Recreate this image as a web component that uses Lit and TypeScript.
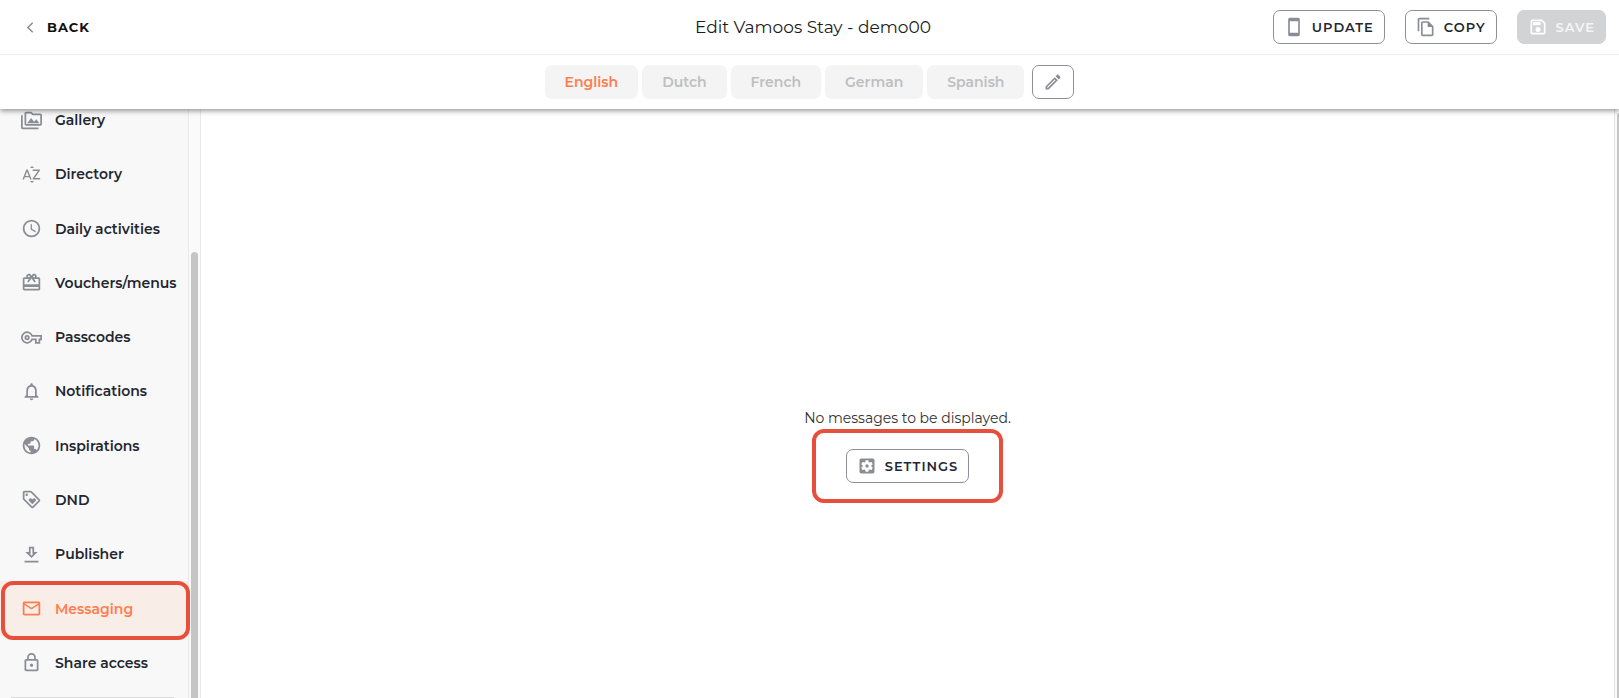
import { LitElement, html, svg, css } from "lit";
import { customElement, property, state } from "lit/decorators.js";

const icons: Record<string, unknown> = {
  back: svg`<path d="M14.500 6.500 9 12l5.500 5.500" fill="none" stroke="currentColor" stroke-width="1.600"/>`,
  gallery: svg`<path d="M2 6H0v14c0 1.100.9 2 2 2h18v-2H2V6zm5 9h14l-3.500-4.500-2.500 3.010L11.500 9zM22 4h-8l-2-2H6c-1.100 0-2 .9-2 2v12c0 1.100.9 2 2 2h16c1.100 0 2-.9 2-2V6c0-1.100-.9-2-2-2zm0 12H6V4h5.170l2 2H22v10z"/>`,
  directory: svg`<path d="M14.940 4.660h-4.720l2.360-2.360 2.360 2.360zm-4.690 14.710h4.660l-2.330 2.330-2.330-2.330zM6.100 6.270L1.600 17.730h1.840l.92-2.450h5.110l.92 2.450h1.840L7.740 6.270H6.100zm-1.130 7.370l1.940-5.180 1.940 5.180H4.970zm10.760 2.500h6.120v1.590h-8.530v-1.290l5.920-8.560h-5.880v-1.600h8.300v1.260l-5.930 8.600z"/>`,
  clock: svg`<path d="M12 2a10 10 0 1 0 0 20 10 10 0 0 0 0-20zm0 18a8 8 0 1 1 0-16 8 8 0 0 1 0 16zm.5-13H11v6l5.250 3.150.75-1.230-4.500-2.670z"/>`,
  gift: svg`<path d="M20 6h-2.180c.11-.31.18-.65.18-1 0-1.660-1.340-3-3-3-1.050 0-1.960.54-2.500 1.350l-.5.670-.5-.68C10.960 2.540 10.050 2 9 2 7.340 2 6 3.340 6 5c0 .35.07.69.18 1H4c-1.110 0-2 .89-2 2v11c0 1.110.89 2 2 2h16c1.110 0 2-.89 2-2V8c0-1.110-.89-2-2-2zm-5-2a1 1 0 1 1 0 2 1 1 0 0 1 0-2zM9 4a1 1 0 1 1 0 2 1 1 0 0 1 0-2zm11 15H4v-2h16v2zm0-5H4V8h5.080L7 10.830 8.620 12 12 7.400l3.380 4.600L17 10.830 14.920 8H20v6z"/>`,
  key: svg`<path d="M22 19h-6v-4h-2.680A7 7 0 1 1 13.320 9H24v6h-2v4zm-4-2h2v-4h2v-2H11.940l-.23-.67A5 5 0 1 0 11.710 13.670l.23-.67H18v4zM7 15a3 3 0 1 1 0-6 3 3 0 0 1 0 6zm0-4a1 1 0 1 0 0 2 1 1 0 0 0 0-2z"/>`,
  bell: svg`<path d="M12 22c1.100 0 2-.9 2-2h-4c0 1.100.9 2 2 2zm6-6v-5c0-3.070-1.630-5.640-4.500-6.320V4a1.500 1.500 0 0 0-3 0v.68C7.640 5.360 6 7.920 6 11v5l-2 2v1h16v-1l-2-2zm-2 1H8v-6c0-2.480 1.510-4.500 4-4.500s4 2.020 4 4.500v6z"/>`,
  globe: svg`<path d="M12 2C6.480 2 2 6.480 2 12s4.480 10 10 10 10-4.480 10-10S17.520 2 12 2zm-1 17.930c-3.950-.49-7-3.850-7-7.930 0-.62.08-1.210.21-1.790L9 15v1c0 1.100.9 2 2 2v1.930zm6.900-2.540c-.26-.81-1-1.390-1.900-1.390h-1v-3c0-.55-.45-1-1-1H8v-2h2c.55 0 1-.45 1-1V7h2c1.100 0 2-.9 2-2v-.41c2.930 1.190 5 4.060 5 7.410 0 2.080-.8 3.970-2.100 5.390z"/>`,
  tag: svg`<path d="M21.410 11.580l-9-9C12.050 2.220 11.550 2 11 2H4c-1.100 0-2 .9-2 2v7c0 .55.22 1.050.59 1.420l9 9c.36.36.86.58 1.410.58s1.050-.22 1.410-.59l7-7c.37-.36.59-.86.59-1.410s-.23-1.060-.59-1.420zM13 20.010L4 11V4h7l9 9-7 7.010z"/><circle cx="6.500" cy="6.500" r="1.500"/><path d="M8.900 12.550c0 .57.23 1.070.6 1.450l3.500 3.500 3.500-3.500c.37-.37.6-.89.6-1.450 0-1.130-.92-2.050-2.050-2.050-.57 0-1.080.23-1.450.6l-.6.6-.6-.59c-.37-.38-.89-.61-1.450-.61-1.130 0-2.050.92-2.050 2.050z"/>`,
  download: svg`<path d="M19 9h-4V3H9v6H5l7 7 7-7zm-8 2V5h2v6h1.170L12 13.170 9.830 11H11zm-7 8h16v2H4z"/>`,
  mail: svg`<path d="M22 6c0-1.100-.9-2-2-2H4c-1.100 0-2 .9-2 2v12c0 1.100.9 2 2 2h16c1.100 0 2-.9 2-2V6zm-2 0l-8 5-8-5h16zm0 12H4V8l8 5 8-5v10z"/>`,
  lock: svg`<path d="M18 8h-1V6A5 5 0 0 0 7 6v2H6c-1.100 0-2 .9-2 2v10c0 1.100.9 2 2 2h12c1.100 0 2-.9 2-2V10c0-1.100-.9-2-2-2zM9 6a3 3 0 0 1 6 0v2H9V6zm9 14H6V10h12v10z"/><circle cx="12" cy="15" r="1.800"/>`,
  phone: svg`<path d="M17 1H7a2 2 0 0 0-2 2v18c0 1.100.9 2 2 2h10a2 2 0 0 0 2-2V3a2 2 0 0 0-2-2zm0 18H7V5h10v14z"/>`,
  copy: svg`<path d="M16 1H4c-1.100 0-2 .9-2 2v14h2V3h12V1zm-1 4H8c-1.100 0-2 .9-2 2v14c0 1.100.89 2 1.990 2H19c1.100 0 2-.9 2-2V11l-6-6zM8 21V7h6v5h5v9H8z"/>`,
  save: svg`<path d="M17 3H5a2 2 0 0 0-2 2v14a2 2 0 0 0 2 2h14c1.100 0 2-.9 2-2V7l-4-4zm2 16H5V5h11.170L19 7.830V19zm-7-7a3 3 0 1 0 0 6 3 3 0 0 0 0-6zM6 6h9v4H6z"/>`,
  pencil: svg`<path d="M14.060 9.020l.92.92L5.920 19H5v-.92l9.060-9.060M17.660 3c-.25 0-.51.1-.7.29l-1.830 1.830 3.750 3.750 1.830-1.830c.39-.39.39-1.020 0-1.410l-2.340-2.340c-.2-.2-.45-.29-.71-.29zm-3.600 3.190L3 17.250V21h3.750L17.810 9.940l-3.750-3.750z"/>`,
  settings: svg`<path d="M12 10a2 2 0 1 0 0 4 2 2 0 0 0 0-4zm7-7H5a2 2 0 0 0-2 2v14a2 2 0 0 0 2 2h14a2 2 0 0 0 2-2V5a2 2 0 0 0-2-2zm-1.750 9c0 .23-.02.46-.05.68l1.480 1.160c.13.11.17.3.08.45l-1.400 2.420c-.09.15-.27.21-.43.15l-1.740-.7c-.36.28-.76.51-1.180.69l-.26 1.850c-.03.17-.18.3-.35.3h-2.800c-.17 0-.32-.13-.35-.29l-.26-1.850c-.43-.18-.82-.41-1.180-.69l-1.740.7c-.16.06-.34 0-.43-.15l-1.400-2.420c-.09-.15-.05-.34.08-.45l1.480-1.160a5.600 5.600 0 0 1 0-1.370l-1.480-1.160c-.13-.11-.17-.3-.08-.45l1.400-2.420c.09-.15.27-.21.43-.15l1.740.7c.36-.28.76-.51 1.180-.69l.26-1.850c.03-.17.18-.3.35-.3h2.800c.17 0 .32.13.35.29l.26 1.850c.43.18.82.41 1.180.69l1.740-.7c.16-.06.34 0 .43.15l1.400 2.420c.09.15.05.34-.08.45l-1.480 1.160c.03.23.05.46.05.69z"/>`,
};

@customElement("ui-icon")
class UiIcon extends LitElement {
  @property() name = "";

  static styles = css`
    :host { display: inline-flex; flex: none; width: 21px; height: 21px; }
    .glyph { width: 100%; height: 100%; fill: currentColor; }
  `;

  render() {
    return html`<svg class="glyph" viewBox="0 0 24 24" aria-hidden="true">${icons[this.name]}</svg>`;
  }
}

const sections = [
  ["gallery", "Gallery"],
  ["directory", "Directory"],
  ["clock", "Daily activities"],
  ["gift", "Vouchers/menus"],
  ["key", "Passcodes"],
  ["bell", "Notifications"],
  ["globe", "Inspirations"],
  ["tag", "DND"],
  ["download", "Publisher"],
  ["mail", "Messaging"],
  ["lock", "Share access"],
];

const languages = ["English", "Dutch", "French", "German", "Spanish"];

@customElement("app-root")
class AppRoot extends LitElement {
  @state() private section = "Messaging";
  @state() private language = "English";

  static styles = css`
    :host {
      display: flex;
      flex-direction: column;
      height: 100vh;
      overflow: hidden;
      background: #fff;
      color: #1f2731;
      font-family: Montserrat, Inter, "Open Sans", sans-serif;
      font-size: 14px;
      line-height: 18px;
    }
    * { box-sizing: border-box; }
    button { font: inherit; color: inherit; cursor: pointer; }

    .top { position: relative; z-index: 1; flex: none; background: #fff; box-shadow: 0 2px 5px rgba(0, 0, 0, 0.4); }
    .bar {
      display: grid;
      grid-template-columns: 1fr auto 1fr;
      align-items: center;
      height: 55px;
      padding: 0 13px 0 20px;
      border-bottom: 1px solid #efefef;
    }
    .back {
      display: inline-flex;
      align-items: center;
      gap: 6px;
      justify-self: start;
      color: #111;
      font-size: 13px;
      font-weight: 700;
      letter-spacing: 1px;
      text-decoration: none;
    }
    .back ui-icon { color: #85898f; }
    .title { margin: 0; color: #1c1c1c; font-size: 17px; line-height: 24px; font-weight: 400; }
    .actions { display: flex; gap: 20px; justify-self: end; }
    .btn {
      display: inline-flex;
      align-items: center;
      justify-content: center;
      gap: 8px;
      height: 34px;
      padding: 0 10px;
      border: 1px solid #8d9197;
      border-radius: 7px;
      background: #fff;
      font-size: 13px;
      font-weight: 600;
      letter-spacing: 1px;
    }
    .btn ui-icon { width: 20px; height: 20px; color: #8a8d96; }
    .btn:disabled { border-color: #d1d3d4; background: #d1d3d4; color: #f6f6f6; cursor: default; }
    .btn:disabled ui-icon { color: #fff; }

    .languages { display: flex; justify-content: center; align-items: center; gap: 4px; height: 54px; }
    .lang {
      height: 34px;
      padding: 0 20px;
      border: 0;
      border-radius: 7px;
      background: #f4f4f4;
      color: #bdbfc1;
      font-weight: 600;
    }
    .lang.active { color: #ff7d4d; }
    .edit { width: 42px; margin-left: 4px; padding: 0; }

    .body { display: flex; flex: 1; min-height: 0; }
    .side { display: flex; flex: none; width: 201px; overflow: hidden; background: #f8f8f8; }
    .menu {
      display: flex;
      flex: 1;
      flex-direction: column;
      height: calc(100% + 16px);
      margin: -16px 0 0;
      padding: 0;
      list-style: none;
    }
    .entry { position: relative; flex: 1 0 54px; }
    .link {
      display: flex;
      align-items: center;
      gap: 13px;
      height: 100%;
      padding-left: 21px;
      color: inherit;
      font-weight: 600;
      text-decoration: none;
      white-space: nowrap;
    }
    .link ui-icon { color: #8a8d96; }
    .link.active { background: #f9ede8; color: #ff7d4d; }
    .link.active ui-icon { color: inherit; }
    .mark { position: absolute; border: 4px solid #e64f3c; border-radius: 12px; pointer-events: none; }
    .entry .mark { z-index: 1; inset: 0 -2px -4px 1px; }
    .rule { flex: none; height: 1px; margin: 7px 14px 0 11px; background: #dcdcdc; }
    .track {
      display: flex;
      flex: none;
      width: 13px;
      padding: 143px 2px 0;
      border: solid #e9e9e9;
      border-width: 0 1px;
      background: #fafafa;
    }
    .thumb { flex: 1; border-radius: 4px 4px 0 0; background: #c5c5c5; }

    .main {
      display: flex;
      flex: 1;
      flex-direction: column;
      align-items: center;
      justify-content: center;
      gap: 22px;
      padding-top: 85px;
    }
    .empty { margin: 0; color: #333; }
    .spot { position: relative; display: flex; }
    .spot .mark { inset: -20px -34px; }
    .edge { flex: none; width: 5px; padding: 4px 0 0 2px; border-left: 1px solid #e4e4e4; background: #fafafa; }
    .edge-thumb { height: 100%; border-radius: 2px 0 0 0; background: #c5c5c5; }
  `;

  render() {
    return html`
      <header class="top">
        <div class="bar">
          <a class="back" href="#back"><ui-icon name="back"></ui-icon>BACK</a>
          <h1 class="title">Edit Vamoos Stay - demo00</h1>
          <div class="actions">
            <button class="btn"><ui-icon name="phone"></ui-icon>UPDATE</button>
            <button class="btn"><ui-icon name="copy"></ui-icon>COPY</button>
            <button class="btn" disabled><ui-icon name="save"></ui-icon>SAVE</button>
          </div>
        </div>
        <div class="languages">
          ${languages.map(
            (name) => html`<button
              class="lang ${name === this.language ? "active" : ""}"
              @click=${() => (this.language = name)}
            >${name}</button>`
          )}
          <button class="btn edit" aria-label="Edit languages"><ui-icon name="pencil"></ui-icon></button>
        </div>
      </header>
      <div class="body">
        <nav class="side">
          <ul class="menu">
            ${sections.map(
              ([icon, name]) => html`<li class="entry">
                <a
                  class="link ${name === this.section ? "active" : ""}"
                  href="#${icon}"
                  @click=${() => (this.section = name)}
                ><ui-icon name=${icon}></ui-icon>${name}</a>
                ${name === "Messaging" ? html`<span class="mark"></span>` : ""}
              </li>`
            )}
            <li class="rule" role="separator"></li>
          </ul>
          <div class="track"><div class="thumb"></div></div>
        </nav>
        <main class="main">
          <p class="empty">No messages to be displayed.</p>
          <div class="spot">
            <button class="btn"><ui-icon name="settings"></ui-icon>SETTINGS</button>
            <span class="mark"></span>
          </div>
        </main>
        <div class="edge"><div class="edge-thumb"></div></div>
      </div>
    `;
  }
}
